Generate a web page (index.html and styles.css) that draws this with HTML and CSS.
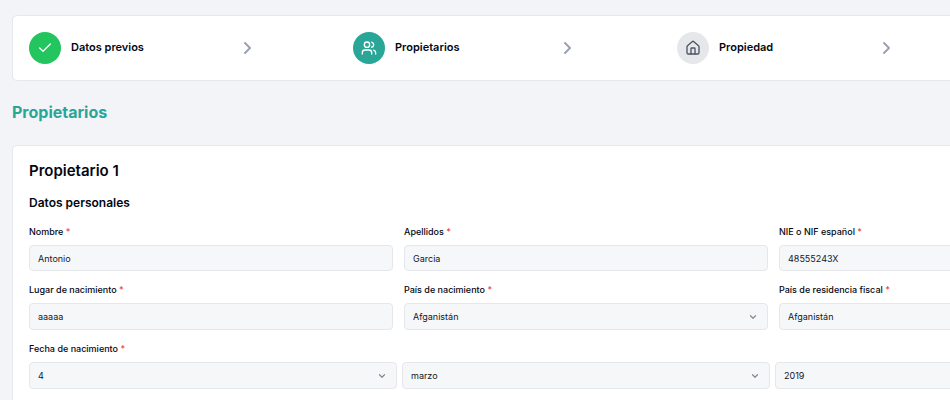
FILE: index.html
```html
<!DOCTYPE html>
<html lang="es">
<head>
    <meta charset="UTF-8">
    <meta name="viewport" content="width=device-width, initial-scale=1.0">
    <title>Propietarios</title>
    <link rel="stylesheet" href="styles.css">
</head>
<body>
    <main class="page">
        <ol class="card steps">
            <li class="step">
                <span class="step-icon done">
                    <svg width="16" height="16" viewBox="0 0 24 24"><path d="M20 6 9 17l-5-5"/></svg>
                </span>
                <span class="step-label">Datos previos</span>
                <svg class="step-arrow" width="20" height="20" viewBox="0 0 20 20"><path d="m7 15 5-5-5-5"/></svg>
            </li>
            <li class="step">
                <span class="step-icon active">
                    <svg width="16" height="16" viewBox="0 0 24 24"><path d="M16 21v-2a4 4 0 0 0-4-4H6a4 4 0 0 0-4 4v2"/><circle cx="9" cy="7" r="4"/><path d="M22 21v-2a4 4 0 0 0-3-3.87"/><path d="M16 3.13a4 4 0 0 1 0 7.75"/></svg>
                </span>
                <span class="step-label">Propietarios</span>
                <svg class="step-arrow" width="20" height="20" viewBox="0 0 20 20"><path d="m7 15 5-5-5-5"/></svg>
            </li>
            <li class="step">
                <span class="step-icon">
                    <svg width="16" height="16" viewBox="0 0 24 24"><path d="M15 21v-8a1 1 0 0 0-1-1h-4a1 1 0 0 0-1 1v8"/><path d="M3 10a2 2 0 0 1 .709-1.528l7-5.999a2 2 0 0 1 2.582 0l7 5.999A2 2 0 0 1 21 10v9a2 2 0 0 1-2 2H5a2 2 0 0 1-2-2z"/></svg>
                </span>
                <span class="step-label">Propiedad</span>
                <svg class="step-arrow" width="20" height="20" viewBox="0 0 20 20"><path d="m7 15 5-5-5-5"/></svg>
            </li>
        </ol>

        <h1 class="page-title">Propietarios</h1>

        <form class="card">
            <h2 class="owner-title">Propietario 1</h2>
            <h3 class="owner-section">Datos personales</h3>
            <div class="fields">
                <div class="field">
                    <label for="nombre">Nombre <span class="required">*</span></label>
                    <input class="control" id="nombre" type="text" value="Antonio">
                </div>
                <div class="field">
                    <label for="apellidos">Apellidos <span class="required">*</span></label>
                    <input class="control" id="apellidos" type="text" value="Garcia">
                </div>
                <div class="field">
                    <label for="nif">NIE o NIF español <span class="required">*</span></label>
                    <input class="control" id="nif" type="text" value="48555243X">
                </div>
                <div class="field">
                    <label for="lugar">Lugar de nacimiento <span class="required">*</span></label>
                    <input class="control" id="lugar" type="text" value="aaaaa">
                </div>
                <div class="field">
                    <label for="pais">País de nacimiento <span class="required">*</span></label>
                    <select class="control" id="pais"><option>Afganistán</option></select>
                </div>
                <div class="field">
                    <label for="residencia">País de residencia fiscal <span class="required">*</span></label>
                    <select class="control" id="residencia"><option>Afganistán</option></select>
                </div>
                <div class="field field-date">
                    <label for="dia">Fecha de nacimiento <span class="required">*</span></label>
                    <div class="date">
                        <select class="control" id="dia"><option>4</option></select>
                        <select class="control" aria-label="Mes"><option>marzo</option></select>
                        <select class="control" aria-label="Año"><option>2019</option></select>
                    </div>
                </div>
            </div>
        </form>
    </main>
</body>
</html>
```
FILE: styles.css
```css
* {
    box-sizing: border-box;
}

body {
    margin: 0;
    background: #f3f4f8;
    color: #030712;
    font-family: Inter, "Liberation Sans", sans-serif;
    font-size: 9px;
    overflow-x: hidden;
}

h1, h2, h3, ol {
    margin: 0;
}

svg {
    fill: none;
    stroke: currentColor;
    stroke-width: 2;
    stroke-linecap: round;
    stroke-linejoin: round;
}

.page {
    min-width: 1172px;
    padding: 15px 12px;
}

.card {
    padding: 16px;
    background: #ffffff;
    border: 1px solid #e5e7eb;
    border-radius: 5px;
}

/* steps */
.steps {
    display: grid;
    grid-template-columns: repeat(3, 1fr) 142px;
    list-style: none;
}

.step {
    display: flex;
    align-items: center;
}

.step-icon {
    display: flex;
    align-items: center;
    justify-content: center;
    width: 32px;
    height: 32px;
    margin-right: 10px;
    border-radius: 50%;
    background: #e5e7eb;
    color: #4b5563;
}

.step-icon.done {
    background: #22c55e;
    color: #ffffff;
}

.step-icon.active {
    background: #2aa698;
    color: #ffffff;
}

.step-label {
    font-size: 11px;
    font-weight: 600;
    line-height: 14px;
    padding-bottom: 2px;
}

.step-arrow {
    margin: 0 auto;
    color: #9ca3af;
}

.page-title {
    margin: 19px 0 21px;
    color: #2aa698;
    font-size: 16px;
    font-weight: 700;
    line-height: 24px;
}

/* owner form */
.owner-title {
    font-size: 15px;
    font-weight: 600;
    line-height: 18px;
}

.owner-section {
    margin: 14px 0 13px;
    font-size: 12px;
    font-weight: 600;
    line-height: 18px;
}

.fields {
    display: grid;
    grid-template-columns: repeat(3, 1fr);
    row-gap: 12px;
    column-gap: 11px;
}

.field {
    display: flex;
    flex-direction: column;
    gap: 6px;
    min-width: 0;
}

.field label {
    font-weight: 500;
    line-height: 14px;
}

.required {
    color: #ef4444;
}

.control {
    flex: 1 0 auto;
    width: 100%;
    min-height: 26px;
    padding: 0 8px;
    background-color: #f6f7f9;
    border: 1px solid #e5e7eb;
    border-radius: 4px;
    color: #111827;
    font-family: inherit;
    font-size: 9px;
}

select.control {
    min-height: 27px;
    appearance: none;
    background-image: url("data:image/svg+xml,%3Csvg xmlns='http://www.w3.org/2000/svg' viewBox='0 0 24 24' fill='none' stroke='%23868b94' stroke-width='3' stroke-linecap='round' stroke-linejoin='round'%3E%3Cpath d='m6 9 6 6 6-6'/%3E%3C/svg%3E");
    background-repeat: no-repeat;
    background-position: right 9px center;
    background-size: 10px 10px;
}

.control:focus {
    outline: 2px solid #2aa698;
}

.field-date {
    grid-column: 1 / -1;
}

.date {
    display: grid;
    grid-template-columns: repeat(3, 1fr);
    gap: 5px;
}
```
